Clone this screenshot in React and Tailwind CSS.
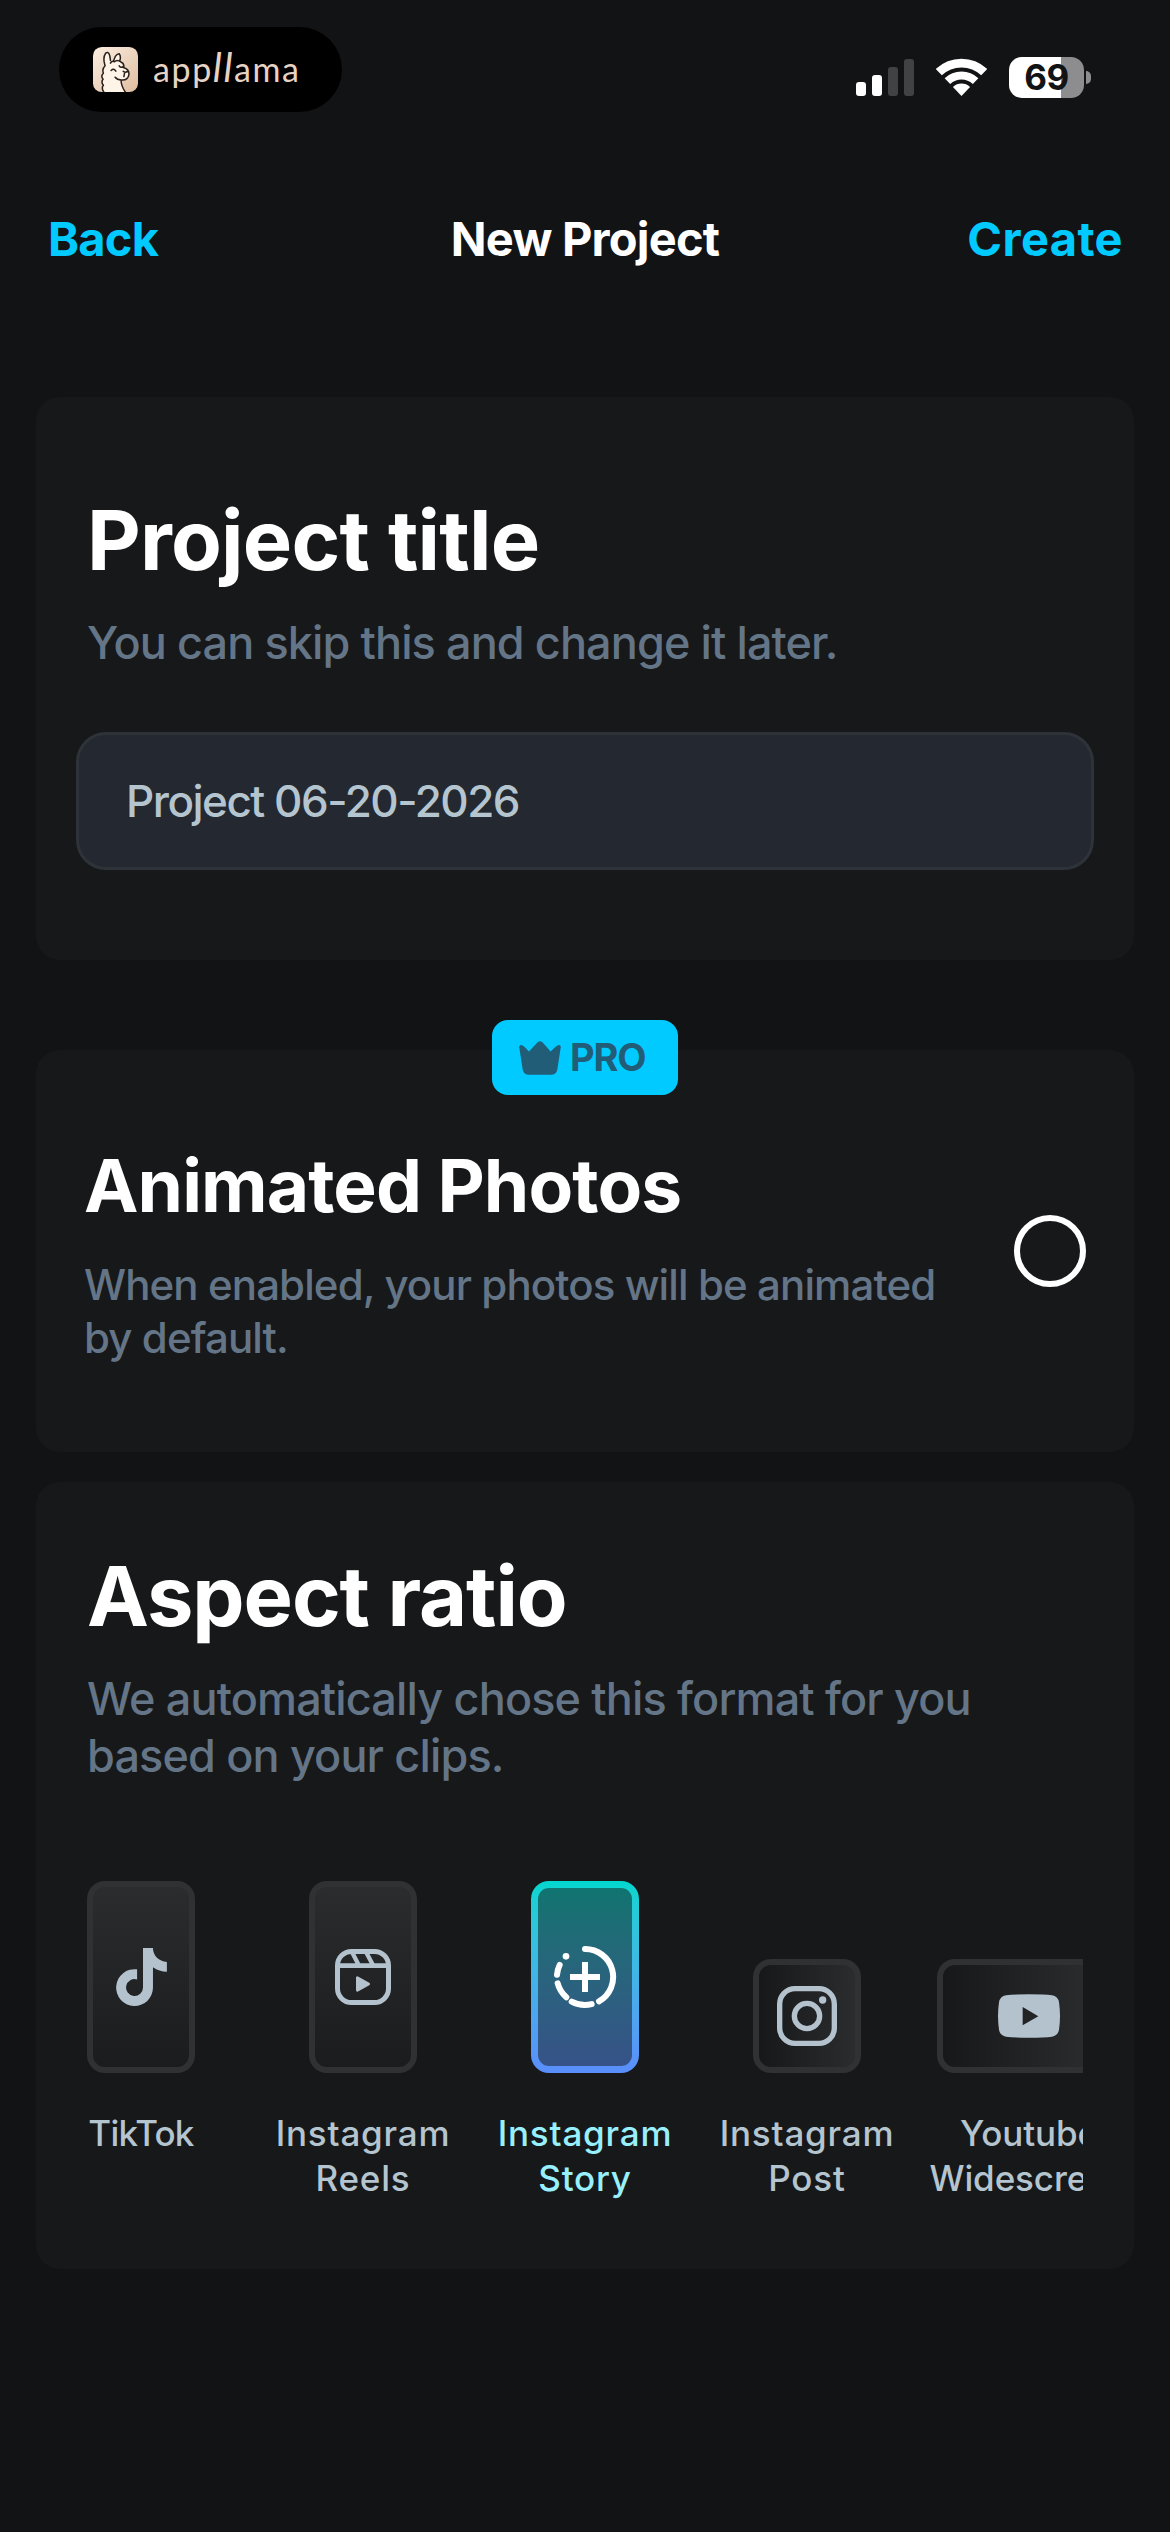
import React, { useState } from 'react';
import { FaTiktok } from 'react-icons/fa6';

function LlamaLogo() {
    return (
        <svg className="w-[45px] h-[45px]" viewBox="0 0 134 134" fill="none">
            <defs>
                <linearGradient id="llama-bg" x1="0" y1="0" x2="1" y2="1">
                    <stop offset="0" stopColor="#fbeee2" />
                    <stop offset="1" stopColor="#dfbd9f" />
                </linearGradient>
            </defs>
            <rect width="134" height="134" rx="26" fill="url(#llama-bg)" />
            <path d="M32 134 Q24 122 31 114 Q23 104 30 96 Q22 86 31 78 Q26 66 36 56 Q28 32 38 18 Q50 10 52 40 L62 42 Q66 22 78 20 Q84 28 80 42 Q92 46 92 62 Q108 66 107 82 Q104 100 84 98 Q82 110 94 134 Z" fill="#fff4e8" />
            <path d="M32 134 Q24 122 31 114 Q23 104 30 96 Q22 86 31 78 Q26 66 36 56 Q28 32 38 18 Q50 10 52 40 M62 40 Q66 22 78 20 Q84 28 80 40 M52 48 Q56 40 64 44 Q72 36 82 44 Q92 48 92 58 Q82 64 78 56 M92 62 Q108 66 107 82 Q104 100 84 98 Q72 98 66 90 M54 70 Q62 62 68 72 M90 72 Q96 78 104 72 M94 78 L92 88 M84 98 Q82 112 96 134" stroke="#2a211c" strokeWidth="4.5" strokeLinecap="round" strokeLinejoin="round" />
        </svg>
    );
}

function WifiIcon() {
    return (
        <svg className="w-[51px] h-[38px]" viewBox="318 55 152 113" fill="none" stroke="#fff">
            <path d="M326.4 97 A98 98 0 0 1 461.6 97" strokeWidth="26" />
            <path d="M352 124 A61 61 0 0 1 436 124" strokeWidth="24" />
            <path d="M394 168 L368.5 141 A37 37 0 0 1 419.5 141 Z" fill="#fff" stroke="none" />
        </svg>
    );
}

function CrownIcon() {
    return (
        <svg className="w-[42px] h-[34px]" viewBox="0 0 126 101" fill="#225d78">
            <path d="M1 20 Q-1 10 9 12 Q14 13 30 31 L55 4 Q63 -4 71 4 L95 31 Q112 13 117 12 Q127 10 125 20 L115 85 Q112 101 96 101 H30 Q14 101 11 85 Z" />
        </svg>
    );
}

function ReelsIcon() {
    return (
        <svg className="w-14 h-14" viewBox="0 0 168 168" fill="none" stroke="currentColor" strokeWidth="15">
            <rect x="7.5" y="7.5" width="153" height="153" rx="42" />
            <path d="M8 50 H160" strokeWidth="14" />
            <path d="M51 9 L72 50 M93 9 L115 50" strokeWidth="13" />
            <path d="M67 86 V124 L101 105 Z" fill="currentColor" strokeWidth="8" strokeLinejoin="round" />
        </svg>
    );
}

function StoryIcon() {
    return (
        <svg className="w-16 h-16" viewBox="0 0 192 192" fill="none" stroke="currentColor" strokeWidth="18" strokeLinecap="round">
            <path d="M96 12 A84 84 0 0 1 138 169" />
            <path d="M116 177.5 A84 84 0 0 1 56 170" />
            <path d="M40 157 A84 84 0 0 1 14 115" />
            <path d="M12 89 A84 84 0 0 1 20 60" />
            <circle cx="39" cy="34" r="10" fill="currentColor" stroke="none" />
            <path d="M96 51 V141 M51 96 H141" strokeLinecap="butt" />
        </svg>
    );
}

function InstagramIcon() {
    return (
        <svg className="w-15 h-15" viewBox="0 0 180 180" fill="none" stroke="currentColor" strokeWidth="16">
            <rect x="8" y="8" width="164" height="164" rx="46" />
            <circle cx="90" cy="90" r="38" />
            <circle cx="137" cy="42" r="11" fill="currentColor" stroke="none" />
        </svg>
    );
}

function YoutubeIcon() {
    return (
        <svg className="w-[62px] h-[44px]" viewBox="0 0 186 130" fill="currentColor">
            <path fillRule="evenodd" d="M93 0 Q140 0 162 3 Q180 6 183 24 Q186 45 186 65 Q186 85 183 106 Q180 124 162 127 Q140 130 93 130 Q46 130 24 127 Q6 124 3 106 Q0 85 0 65 Q0 45 3 24 Q6 6 24 3 Q46 0 93 0 Z M74 38 V93 L121 65.5 Z" />
        </svg>
    );
}

const FORMATS = [
    { id: 'tiktok', lines: ['TikTok'], tile: 'w-[108px] h-[192px] bg-linear-to-b from-[#2b2c2e] to-[#1b1c1e]', label: 'tracking-[-0.8px]', icon: <FaTiktok className="w-[51px] h-[58px]" /> },
    { id: 'reels', lines: ['Instagram', 'Reels'], tile: 'w-[108px] h-[192px] bg-linear-to-b from-[#2b2c2e] to-[#1b1c1e]', label: 'tracking-[0.8px]', icon: <ReelsIcon /> },
    { id: 'story', lines: ['Instagram', 'Story'], tile: 'w-[108px] h-[192px]', label: 'tracking-[0.8px]', icon: <StoryIcon /> },
    { id: 'post', lines: ['Instagram', 'Post'], tile: 'w-[108px] h-[114px] bg-linear-to-r from-[#17181a] to-[#2b2c2e]', label: 'tracking-[0.8px]', icon: <InstagramIcon /> },
    { id: 'youtube', lines: ['Youtube', 'Widescreen'], tile: 'w-[184px] h-[114px] bg-linear-to-r from-[#17181a] to-[#2e2f31]', label: 'tracking-[-0.1px]', icon: <YoutubeIcon /> },
];

function FormatOption({ format, active, onSelect }) {
    return (
        <button type="button" onClick={onSelect} className="w-[222px] shrink-0 flex flex-col items-center">
            <div className="h-[192px] flex items-end">
                {active ? (
                    <div className="w-[108px] h-[192px] rounded-[18px] p-[7px] bg-linear-to-b from-[#00d6cf] to-[#5a8efb]">
                        <div className="w-full h-full rounded-[11px] bg-linear-to-b from-[#0f7470] to-[#365288] flex items-center justify-center text-white">
                            {format.icon}
                        </div>
                    </div>
                ) : (
                    <div className={`${format.tile} rounded-[18px] border-[6.5px] border-[#303133] flex items-center justify-center text-[#b4c2cd]`}>
                        {format.icon}
                    </div>
                )}
            </div>
            <div className={`mt-[38px] text-[35px] leading-[45px] font-medium ${format.label} ${active ? 'text-[#98f0ff]' : 'text-[#b4c5cf]'}`}>
                {format.lines.map((line) => (
                    <div key={line}>{line}</div>
                ))}
            </div>
        </button>
    );
}

export default function App() {
    const [title, setTitle] = useState('Project 06-20-2026');
    const [animated, setAnimated] = useState(false);
    const [selected, setSelected] = useState('story');

    return (
        <div className="w-[1170px] h-[2532px] bg-[#121315] overflow-hidden font-['Inter',sans-serif]">

            {/* STATUS BAR */}
            <div className="h-[211px] pt-[27px] pl-[59px] pr-[79px] flex items-start justify-between">
                <div className="w-[283px] h-[85px] rounded-full bg-black flex items-center pl-[34px]">
                    <LlamaLogo />
                    <span className="ml-[15px] -mt-1 font-['Lato',sans-serif] text-[34px] leading-[44px] tracking-[1.6px] text-[#e6d3c4]">
                        app<span className="text-[40px] leading-[44px] italic">ll</span>ama
                    </span>
                </div>
                <div className="h-[98px] pt-[30px] flex items-start">
                    <div className="h-[39px] flex items-end gap-[6px]">
                        <div className="w-[10px] h-[14px] rounded-[3px] bg-white" />
                        <div className="w-[10px] h-[21px] rounded-[3px] bg-white" />
                        <div className="w-[10px] h-[29px] rounded-[3px] bg-[#414244]" />
                        <div className="w-[10px] h-[37px] rounded-[3px] bg-[#414244]" />
                    </div>
                    <div className="ml-[22px] mt-[1px]">
                        <WifiIcon />
                    </div>
                    <div className="ml-[22px] w-[75px] h-[41px] rounded-[13px] bg-linear-to-r from-white from-[69%] to-[#8d8d8f] to-[69%] flex items-center justify-center font-bold text-[35px] tracking-[-0.5px] text-[#121315]">
                        69
                    </div>
                    <div className="ml-[2px] mt-[14px] w-[5px] h-[13px] rounded-r-full bg-[#8d8d8f]" />
                </div>
            </div>

            {/* HEADER */}
            <div className="grid grid-cols-3 items-center px-[47px] h-14 text-[47px] leading-[56px] font-bold">
                <button type="button" className="pl-[1px] text-left tracking-[-0.8px] text-[#00caff]">Back</button>
                <h1 className="text-center tracking-[-0.8px] text-white whitespace-nowrap">New Project</h1>
                <button type="button" className="text-right tracking-[0.4px] text-[#00caff]">Create</button>
            </div>

            <div className="px-9">

                {/* PROJECT TITLE */}
                <section className="mt-[130px] h-[563px] rounded-[24px] bg-[#17181a] pt-[93px] px-[40px]">
                    <h2 className="pl-[11px] text-[83px] leading-[100px] font-bold tracking-[-0.8px] text-white">Project title</h2>
                    <p className="pl-[11px] mt-[24px] text-[45px] leading-[57px] font-medium tracking-[-0.9px] text-[#647587]">You can skip this and change it later.</p>
                    <input
                        className="block mt-[61px] w-full h-[138px] rounded-[30px] border-3 border-[#2d3338] bg-[#242830] px-[47px] text-[44px] font-medium tracking-[-1.5px] text-[#b4c5cf] outline-none"
                        value={title}
                        onChange={(e) => setTitle(e.target.value)}
                    />
                </section>

                {/* ANIMATED PHOTOS */}
                <section className="relative mt-[90px] h-[402px] rounded-[24px] bg-[#17181a] pt-[92px] pl-[48px] pr-[48px] flex items-start justify-between">
                    <div className="absolute -top-[30px] left-1/2 -translate-x-1/2 w-[186px] h-[75px] rounded-[16px] bg-[#00caff] flex items-center pl-[27px] gap-[9px] text-[38px] font-bold tracking-[-1.2px] text-[#225d78]">
                        <CrownIcon />
                        PRO
                    </div>
                    <div>
                        <h2 className="text-[73px] leading-[88px] font-bold tracking-[-0.9px] text-white">Animated Photos</h2>
                        <p className="mt-[28px] w-[880px] text-[42px] leading-[53px] font-medium tracking-[-0.9px] text-[#647587]">When enabled, your photos will be animated by default.</p>
                    </div>
                    <button
                        type="button"
                        onClick={() => setAnimated(!animated)}
                        className={`mt-[73px] w-[72px] h-[72px] rounded-full border-6 border-white shrink-0 ${animated ? 'bg-[#00caff]' : ''}`}
                    />
                </section>

                {/* ASPECT RATIO */}
                <section className="mt-[30px] h-[787px] rounded-[24px] bg-[#17181a] pt-[64px] px-[51px]">
                    <h2 className="text-[83px] leading-[100px] font-bold tracking-[-1.1px] text-white">Aspect ratio</h2>
                    <p className="mt-[24px] w-[920px] text-[45px] leading-[57px] font-medium tracking-[-0.85px] text-[#647587]">We automatically chose this format for you based on your clips.</p>
                    <div className="mt-[97px] overflow-hidden">
                        <div className="flex -ml-[57px]">
                            {FORMATS.map((format) => (
                                <FormatOption
                                    key={format.id}
                                    format={format}
                                    active={format.id === selected}
                                    onSelect={() => setSelected(format.id)}
                                />
                            ))}
                        </div>
                    </div>
                </section>
            </div>
        </div>
    );
}
